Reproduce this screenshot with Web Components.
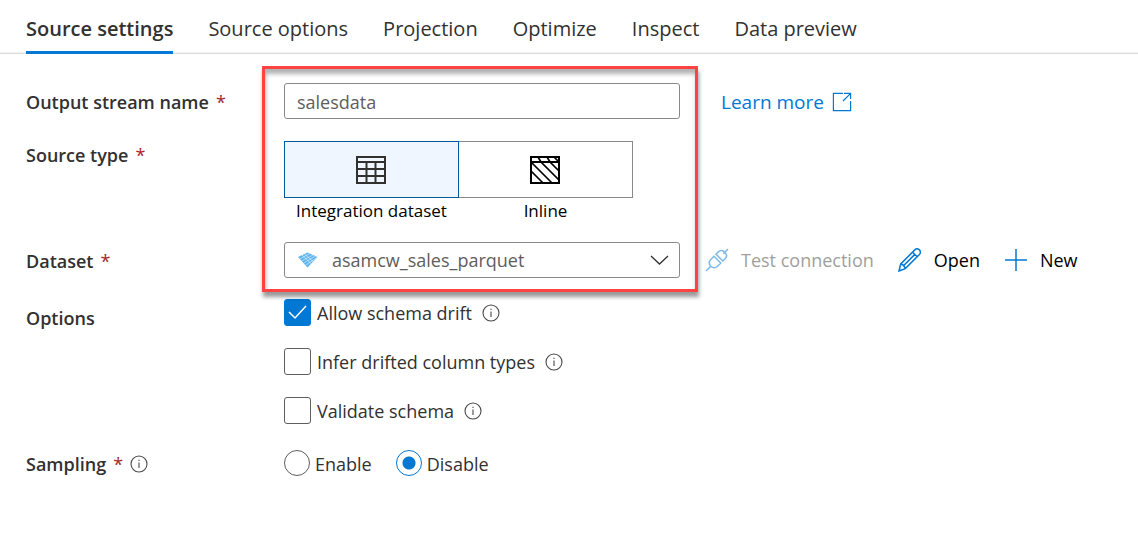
<!DOCTYPE html>
<html lang="en">
<head>
<meta charset="utf-8">
<title>Source settings</title>
<style>
  body { margin: 0; background: #fff; color: #323130; font-family: "Open Sans", "Noto Sans", sans-serif; }
</style>
</head>
<body>
<settings-page></settings-page>

<template id="page-template">
  <style>
    :host { display: block; font-size: 18px; line-height: 28px; }
    main { padding: 29px 26px; }
    .group { position: relative; display: grid; gap: 22px; margin-bottom: 21px; }
    .marker {
      position: absolute; inset: -17px auto -14px 236px; width: 430px;
      border: 3px solid #ff4343; pointer-events: none;
      box-shadow: 1px 5px 4px rgba(0,0,0,.4), inset 1px 5px 4px rgba(0,0,0,.3);
    }
  </style>
  <tab-bar>
    <tab-item active>Source settings</tab-item>
    <tab-item>Source options</tab-item>
    <tab-item>Projection</tab-item>
    <tab-item>Optimize</tab-item>
    <tab-item>Inspect</tab-item>
    <tab-item>Data preview</tab-item>
  </tab-bar>
  <main>
    <div class="group">
      <text-field label="Output stream name" value="salesdata"><learn-link slot="side"></learn-link></text-field>
      <source-type-field></source-type-field>
      <dataset-field>
        <action-button slot="side" icon="plug" disabled>Test connection</action-button>
        <action-button slot="side" icon="pencil">Open</action-button>
        <action-button slot="side" icon="plus">New</action-button>
      </dataset-field>
      <div class="marker"></div>
    </div>
    <options-field></options-field>
    <sampling-field></sampling-field>
  </main>
</template>

<script>
const ROW_CSS = `
  :host { display: block; }
  * { box-sizing: border-box; }
  .row { display: grid; grid-template-columns: 258px minmax(0, 396px) minmax(0, 1fr); }
  .name { font-size: 18px; line-height: 28px; font-weight: 600; display: flex; align-items: center; gap: 7px; align-self: start; }
  .name.low { padding-top: 5px; }
  .req { color: #a4262c; font-weight: 400; }
  .side { display: flex; align-items: center; gap: 24px; padding-left: 25px; white-space: nowrap; }
  input, select, button { font: inherit; color: inherit; margin: 0; }
`;
const REQ = '<span class="req">*</span>';

function define(name, render) {
  customElements.define(name, class extends HTMLElement {
    connectedCallback() {
      if (this.shadowRoot) return;
      this.attachShadow({ mode: 'open' }).innerHTML = render(this);
    }
  });
}

define('tab-bar', () => `
  <style>
    :host { display: block; border-bottom: 1px solid #dcdcdc; box-shadow: inset 0 -1px #f1f1f1; }
    nav { display: flex; gap: 35px; padding: 0 26px; margin-bottom: -1px; }
  </style>
  <nav role="tablist"><slot></slot></nav>`);

define('tab-item', el => `
  <style>
    :host { display: block; }
    button { display: block; font: inherit; font-size: 20px; line-height: 28px; color: #323130; background: none; border: 0;
      border-bottom: 3px solid transparent; padding: 15px 0 8px; white-space: nowrap; }
    button[aria-selected=true] { font-weight: 600; border-color: #0078d4; }
  </style>
  <button role="tab" aria-selected="${el.hasAttribute('active')}"><slot></slot></button>`);

define('info-icon', () => `
  <style>:host { display: inline-flex; } svg { display: block; }</style>
  <svg width="18" height="18" viewBox="0 0 18 18" fill="none" stroke="#4a4846" stroke-width="1.1">
    <circle cx="9" cy="9" r="8"/><path d="M9 7.5V13"/><path d="M9 4.7v1.3"/>
  </svg>`);

define('learn-link', () => `
  <style>
    :host { display: block; padding-left: 16px; }
    a { display: flex; align-items: center; gap: 8px; color: #0078d4; text-decoration: none; font-size: 19px; padding-top: 2px; }
  </style>
  <a href="#learn">Learn more
    <svg width="20" height="20" viewBox="0 0 20 20" fill="none" stroke="#0078d4" stroke-width="1.2">
      <path d="M11 1.400H1.400v17.200h17.200V9M12 1.400h6.600V7M18.400 1.600L11 9"/>
    </svg>
  </a>`);

const ICONS = {
  plug: `<path d="M1 23l4.600-4.600M18.400 5.600L23 1M5.800 18.200c-2.200-2.400-1.800-5 .2-7l3-3 6.800 6.800-3 3c-2 2-4.600 2.400-7 .2zM11 6.200l2.300-2.300c2-2 4.600-1.700 6.500.3s2.300 4.500.3 6.500L17.800 13z"/>`,
  pencil: `<path d="M1 23l1.700-7L16.800 1.900c1.400-1.400 3.300-1.200 4.600 0s1.300 3.200 0 4.600L7.300 20.600zM2.700 16c1.900.3 4 2.300 4.600 4.600M14.600 4.200l4.600 4.600M5 18.200L16.600 6.600"/>`,
  plus: `<path d="M12 1v22M1 12h22"/>`
};
define('action-button', el => `
  <style>
    :host { display: block; }
    button { display: flex; align-items: center; gap: 12px; font: inherit; font-size: 18px; color: #000; background: none; border: 0; padding: 0; }
    button:disabled { color: #a19f9d; }
    button:disabled svg { opacity: .5; }
    svg { display: block; }
  </style>
  <button ${el.hasAttribute('disabled') ? 'disabled' : ''}>
    <svg width="24" height="24" viewBox="0 0 24 24" fill="none" stroke="#0078d4" stroke-width="1.5">${ICONS[el.getAttribute('icon')]}</svg>
    <slot></slot>
  </button>`);

define('text-field', el => `
  <style>${ROW_CSS}
    input { width: 100%; height: 36px; padding: 2px 12px 0; border: 1px solid #8a8886; border-radius: 3px; color: #605e5c; font-size: 18px; background: #fff; }
  </style>
  <div class="row">
    <label class="name low" for="field">${el.getAttribute('label')}${REQ}</label>
    <input id="field" type="text" value="${el.getAttribute('value')}">
    <div class="side"><slot name="side"></slot></div>
  </div>`);

define('source-type-field', () => `
  <style>${ROW_CSS}
    .choices { display: flex; }
    .choice { width: 175px; text-align: center; color: #000; font-size: 17px; line-height: 18px; }
    .choice + .choice { margin-left: -1px; }
    button { display: flex; align-items: center; justify-content: center; width: 100%; height: 57px; margin-bottom: 4px; background: #fff; border: 1px solid #8a8886; padding: 0 2px 0 0; }
    button[aria-pressed=true] { position: relative; background: #f0f6ff; border-color: #005a9e; }
  </style>
  <div class="row">
    <span class="name" id="n">Source type${REQ}</span>
    <div class="choices" role="group" aria-labelledby="n">
      <div class="choice">
        <button aria-pressed="true" aria-labelledby="a">
          <svg width="30" height="28" viewBox="0 0 30 28" fill="none" stroke="#323130" stroke-width="2">
            <path d="M1 1h28v26H1zM1 6h28M1 13h28M1 20h28M10.500 6v21M19.500 6v21"/>
          </svg>
        </button>
        <span id="a">Integration dataset</span>
      </div>
      <div class="choice">
        <button aria-pressed="false" aria-labelledby="b">
          <svg width="30" height="28" viewBox="0 0 30 28" fill="none" stroke="#000" stroke-width="2">
            <path d="M1 1h28v26H1zM1 6h28"/>
            <path stroke-width="1.700" d="M1 15l12 12M1 6l21 21M8 1l3 5 18 18M17 1l3 5 9 9M24 1l5 5"/>
          </svg>
        </button>
        <span id="b">Inline</span>
      </div>
    </div>
  </div>`);

define('dataset-field', () => `
  <style>${ROW_CSS}
    .box { position: relative; }
    select { display: block; appearance: none; width: 100%; height: 36px; padding: 0 40px 0 47px; border: 1px solid #8a8886; border-radius: 3px; color: #605e5c; font-size: 18px; background: #fff; }
    svg { position: absolute; pointer-events: none; }
    .logo { left: 14px; top: 10px; }
    .chevron { right: 11px; top: 13px; }
  </style>
  <div class="row">
    <label class="name low" for="ds">Dataset${REQ}</label>
    <div class="box">
      <select id="ds"><option>asamcw_sales_parquet</option></select>
      <svg class="logo" width="20" height="16" viewBox="0 0 20 16">
        <path fill="#5cb3ee" d="M0 5L9.500 .5 19.500 5 9.500 15.500z"/>
        <path stroke="#fff" stroke-opacity=".65" stroke-width=".8" fill="none" d="M1.500 7L12 1.500M3.500 9L15 3M5.500 11.200L17.500 4M7.500 13.300L19 5.500M4 3l9 8.500M6.500 2l9 8"/>
      </svg>
      <svg class="chevron" width="19" height="11" viewBox="0 0 19 11" fill="none" stroke="#323130" stroke-width="1.300"><path d="M1 1l8.500 8L18 1"/></svg>
    </div>
    <div class="side"><slot name="side"></slot></div>
  </div>`);

define('options-field', () => `
  <style>${ROW_CSS}
    .list { display: grid; gap: 22px; }
    .item { display: flex; align-items: center; height: 27px; }
    label { margin: 2px 10px 0 6px; line-height: 25px; }
    input { appearance: none; flex: none; width: 27px; height: 27px; border: 1px solid #605e5c; border-radius: 3px; background: #fff; }
    input:checked { border-color: #0078d4; background: #0078d4; }
    .tick { display: grid; }
    .tick > * { grid-area: 1 / 1; place-self: center; }
    .tick svg { pointer-events: none; }
  </style>
  <div class="row">
    <span class="name low" id="n">Options</span>
    <div class="list" role="group" aria-labelledby="n">
      <div class="item">
        <span class="tick"><input id="drift" type="checkbox" checked>
          <svg width="19" height="15" viewBox="0 0 19 15" fill="none" stroke="#fff" stroke-width="1.500"><path d="M1 7l6 6L18 1"/></svg>
        </span>
        <label for="drift">Allow schema drift</label><info-icon></info-icon>
      </div>
      <div class="item"><input id="infer" type="checkbox"><label for="infer">Infer drifted column types</label><info-icon></info-icon></div>
      <div class="item"><input id="validate" type="checkbox"><label for="validate">Validate schema</label><info-icon></info-icon></div>
    </div>
  </div>`);

define('sampling-field', () => `
  <style>${ROW_CSS}
    :host { margin-top: 26px; }
    .list { display: flex; gap: 24px; }
    .item { display: flex; align-items: center; height: 26px; }
    label { margin: 2px 0 0 5px; line-height: 25px; }
    input { appearance: none; flex: none; width: 26px; height: 26px; border: 1px solid #605e5c; border-radius: 50%; background: #fff; }
    input:checked { border-color: #0078d4; background: radial-gradient(circle, #0078d4 6px, #fff 7px); }
  </style>
  <div class="row">
    <div class="name"><span id="n">Sampling</span>${REQ}<info-icon></info-icon></div>
    <div class="list" role="radiogroup" aria-labelledby="n">
      <div class="item"><input id="on" type="radio" name="sampling"><label for="on">Enable</label></div>
      <div class="item"><input id="off" type="radio" name="sampling" checked><label for="off">Disable</label></div>
    </div>
  </div>`);

customElements.define('settings-page', class extends HTMLElement {
  constructor() {
    super();
    this.attachShadow({ mode: 'open' })
      .append(document.getElementById('page-template').content.cloneNode(true));
  }
});
</script>
</body>
</html>
